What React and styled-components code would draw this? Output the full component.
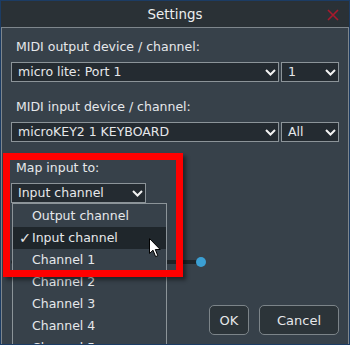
import React from "react";
import styled, { createGlobalStyle } from "styled-components";

const GlobalStyle = createGlobalStyle`
  html, body {
    margin: 0;
    padding: 0;
    background: #2a3136;
  }
  * {
    box-sizing: border-box;
  }
`;

const channels = ["Output channel", "Input channel", "Channel 1", "Channel 2", "Channel 3", "Channel 4", "Channel 5"];

const Chevron = () => (
  <svg width="11" height="7" viewBox="0 0 11 7">
    <polyline points="1,1 5.5,5.5 10,1" fill="none" stroke="#f2f2f2" strokeWidth="2" />
  </svg>
);

const CloseIcon = () => (
  <svg width="12" height="12" viewBox="0 0 12 12">
    <path d="M1 1 L11 11 M11 1 L1 11" stroke="#a91a2d" strokeWidth="1.6" fill="none" />
  </svg>
);

const Cursor = () => (
  <svg width="12" height="20" viewBox="0 0 12 20">
    <path
      d="M0.5 0.5 L0.5 15.5 L4 12.2 L6.6 18.6 L8.8 17.7 L6.3 11.5 L11.2 11.5 Z"
      fill="#ffffff"
      stroke="#000000"
      strokeWidth="1"
      strokeLinejoin="miter"
    />
  </svg>
);

const App = () => {
  return (
    <>
      <GlobalStyle />
      <Window>
        <TitleBar>
          Settings
          <CloseButton>
            <CloseIcon />
          </CloseButton>
        </TitleBar>
        <Content>
          <Field>
            <Label>MIDI output device / channel:</Label>
            <SelectRow>
              <Select $grow>
                micro lite: Port 1
                <Chevron />
              </Select>
              <Select $width={58}>
                1
                <Chevron />
              </Select>
            </SelectRow>
          </Field>
          <Field $gap={18}>
            <Label>MIDI input device / channel:</Label>
            <SelectRow>
              <Select $grow>
                microKEY2 1 KEYBOARD
                <Chevron />
              </Select>
              <Select $width={58}>
                All
                <Chevron />
              </Select>
            </SelectRow>
          </Field>
          <Field>
            <Label>Map input to:</Label>
            <MapHolder>
              <Select $width={135}>
                Input channel
                <Chevron />
              </Select>
              <DropList>
                {channels.map((c) => (
                  <DropItem key={c} $active={c === "Input channel"}>
                    {c === "Input channel" && <Check>✓</Check>}
                    {c}
                  </DropItem>
                ))}
              </DropList>
            </MapHolder>
          </Field>
          <SliderRow>
            <SliderTrack>
              <SliderThumb />
            </SliderTrack>
          </SliderRow>
          <ButtonRow>
            <Button $width={40}>OK</Button>
            <Button $width={80}>Cancel</Button>
          </ButtonRow>
        </Content>
        <Highlight />
        <PointerHolder>
          <Cursor />
        </PointerHolder>
      </Window>
    </>
  );
};

const Window = styled.div`
  position: relative;
  width: 350px;
  height: 345px;
  display: flex;
  flex-direction: column;
  border: 1px solid #1c3c64;
  background: #2a3136;
  font-family: "DejaVu Sans", Verdana, sans-serif;
  font-size: 12.5px;
  color: #e6e8ea;
  overflow: hidden;
`;

const TitleBar = styled.div`
  position: relative;
  height: 26px;
  display: flex;
  align-items: center;
  justify-content: center;
  font-size: 13.4px;
  color: #eceeef;
  padding-top: 1px;
`;

const CloseButton = styled.span`
  position: absolute;
  right: 10px;
  top: 8px;
  line-height: 0;
`;

const Content = styled.div`
  flex: 1;
  display: flex;
  flex-direction: column;
  background: #37414a;
  border: 1px solid #7e868c;
  border-bottom: none;
  padding: 11px 9px 9px 9px;
`;

const Field = styled.div`
  display: flex;
  flex-direction: column;
  margin-bottom: ${({ $gap }) => $gap ?? 17}px;
`;

const Label = styled.div`
  height: 16px;
  line-height: 16px;
  padding-left: 5px;
  margin-bottom: 7px;
`;

const SelectRow = styled.div`
  display: flex;
  gap: 2px;
`;

const Select = styled.div`
  ${({ $grow }) => ($grow ? "flex: 1;" : "")}
  ${({ $width }) => ($width ? `width: ${$width}px;` : "")}
  height: 20px;
  display: flex;
  align-items: center;
  justify-content: space-between;
  padding: 0 2px 0 6px;
  background: #242b31;
  border: 1px solid #8c9499;
  line-height: 18px;
  svg {
    flex-shrink: 0;
  }
`;

const MapHolder = styled.div`
  position: relative;
  display: flex;
`;

const DropList = styled.div`
  position: absolute;
  top: 20px;
  left: 1px;
  width: 155px;
  padding-top: 1px;
  background: #37414a;
  border: 1px solid #8c9499;
  border-bottom: none;
  z-index: 2;
`;

const DropItem = styled.div`
  position: relative;
  height: 22px;
  line-height: 22px;
  padding-left: 19px;
  background: ${({ $active }) => ($active ? "#1f262b" : "transparent")};
`;

const Check = styled.span`
  position: absolute;
  left: 6px;
  top: 0;
  font-size: 14.5px;
  font-weight: bold;
`;

const SliderRow = styled.div`
  margin-top: 37px;
  height: 10px;
  display: flex;
  align-items: center;
`;

const SliderTrack = styled.div`
  position: relative;
  width: 190px;
  height: 4px;
  border-radius: 2px;
  background: #1f2529;
`;

const SliderThumb = styled.div`
  position: absolute;
  right: -5px;
  top: -3px;
  width: 10px;
  height: 10px;
  border-radius: 50%;
  background: #3b9fd3;
`;

const ButtonRow = styled.div`
  margin-top: auto;
  display: flex;
  justify-content: flex-end;
  gap: 10px;
`;

const Button = styled.div`
  width: ${({ $width }) => $width}px;
  height: 30px;
  display: flex;
  align-items: center;
  justify-content: center;
  background: #2c3439;
  border: 1px solid #7c8489;
  border-radius: 5px;
  font-size: 13px;
`;

const Highlight = styled.div`
  position: absolute;
  left: 2px;
  top: 152px;
  width: 180px;
  height: 124px;
  border: 7px solid #ff0000;
  box-shadow: 3px 3px 4px rgba(0, 0, 0, 0.45);
  z-index: 3;
  pointer-events: none;
`;

const PointerHolder = styled.div`
  position: absolute;
  left: 148px;
  top: 237px;
  z-index: 4;
  line-height: 0;
`;

export default App;
